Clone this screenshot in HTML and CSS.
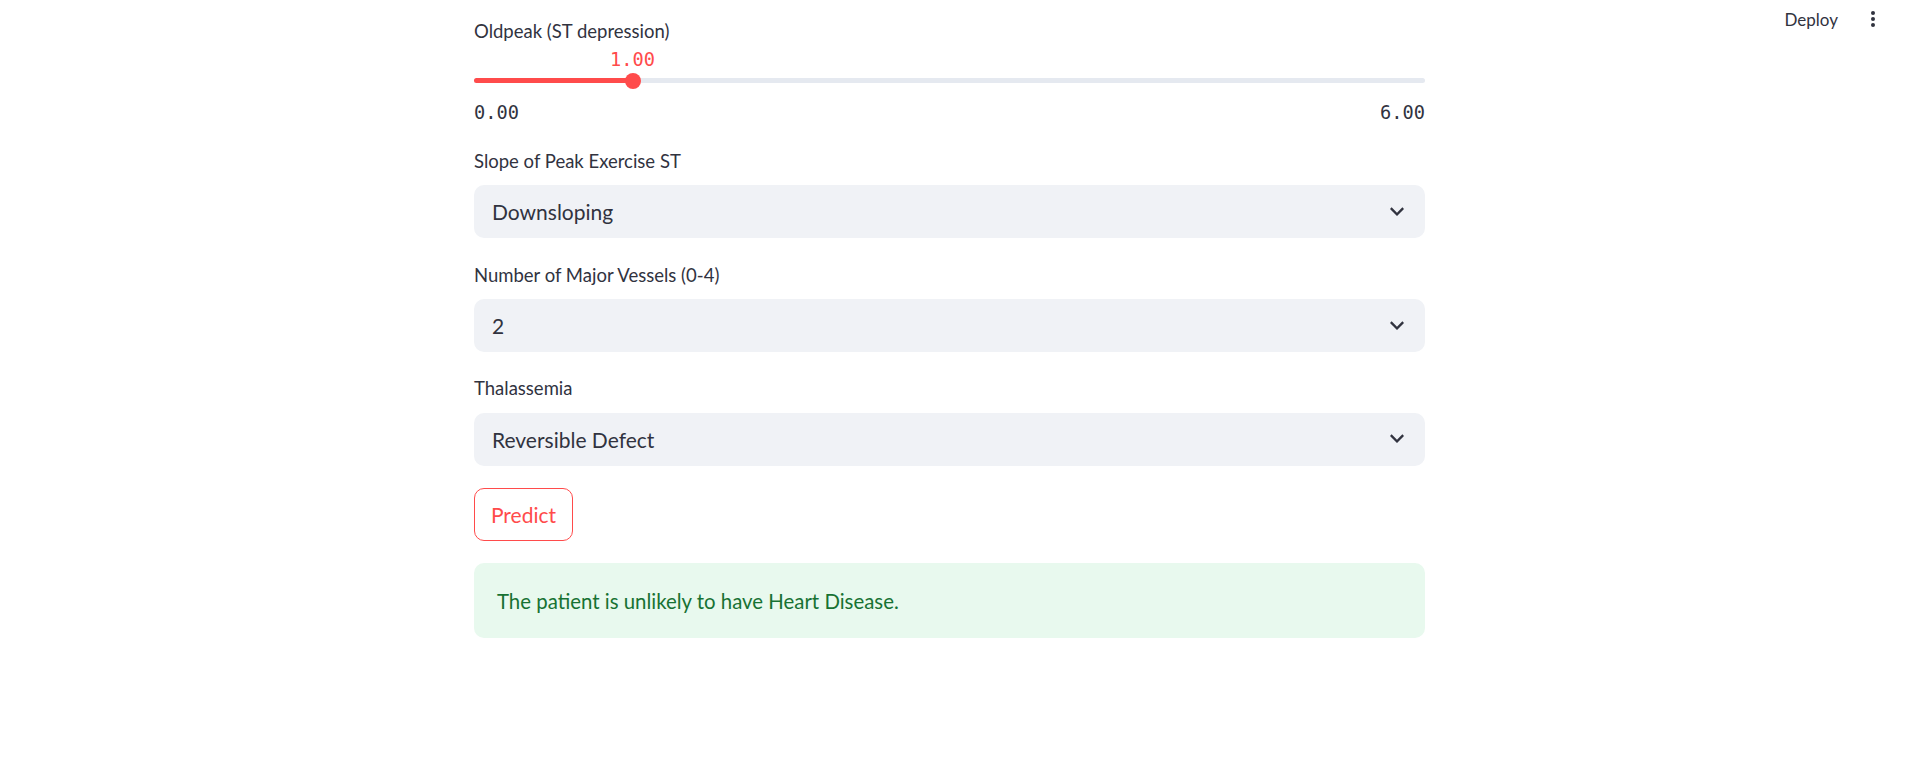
FILE: index.html
```html
<!DOCTYPE html>
<html lang="en">
<head>
<meta charset="utf-8">
<title>Heart Disease Prediction</title>
<link rel="stylesheet" href="styles.css">
</head>
<body>
<header class="topbar">
  <span class="deploy">Deploy</span>
  <span class="kebab"><i></i><i></i><i></i></span>
</header>
<main class="main">
  <section class="field">
    <div class="label">Oldpeak (ST depression)</div>
    <div class="slider">
      <div class="slider-value-row">
        <span class="slider-value" style="left: 16.667%">1.00</span>
      </div>
      <div class="slider-track-row">
        <div class="track">
          <div class="track-fill" style="width: 16.667%"></div>
          <div class="thumb" style="left: 16.667%"></div>
        </div>
      </div>
      <div class="slider-ticks">
        <span>0.00</span>
        <span>6.00</span>
      </div>
    </div>
  </section>

  <section class="field">
    <div class="label">Slope of Peak Exercise ST</div>
    <div class="select">
      <span class="select-text">Downsloping</span>
      <svg class="chevron" viewBox="0 0 24 24" width="28" height="28"><path d="M12 15.4l-6-6L7.4 8l4.6 4.6L16.6 8 18 9.4l-6 6z"/></svg>
    </div>
  </section>

  <section class="field">
    <div class="label">Number of Major Vessels (0-4)</div>
    <div class="select">
      <span class="select-text">2</span>
      <svg class="chevron" viewBox="0 0 24 24" width="28" height="28"><path d="M12 15.4l-6-6L7.4 8l4.6 4.6L16.6 8 18 9.4l-6 6z"/></svg>
    </div>
  </section>

  <section class="field">
    <div class="label">Thalassemia</div>
    <div class="select">
      <span class="select-text">Reversible Defect</span>
      <svg class="chevron" viewBox="0 0 24 24" width="28" height="28"><path d="M12 15.4l-6-6L7.4 8l4.6 4.6L16.6 8 18 9.4l-6 6z"/></svg>
    </div>
  </section>

  <div class="btn-row">
    <button class="btn">Predict</button>
  </div>

  <div class="alert">The patient is unlikely to have Heart Disease.</div>
</main>
</body>
</html>
```

FILE: styles.css
```css
html, body {
  margin: 0;
  padding: 0;
  background: #ffffff;
}

body {
  font-family: Lato, "Noto Sans", sans-serif;
  color: rgb(49, 51, 63);
  width: 1909px;
  height: 757px;
  overflow: hidden;
  position: relative;
}

.topbar {
  position: absolute;
  top: 0;
  right: 0;
  display: flex;
  align-items: center;
  height: 38px;
  padding-right: 34px;
}

.deploy {
  font-size: 17px;
  color: rgb(49, 51, 63);
  margin-right: 33px;
}

.kebab {
  display: flex;
  flex-direction: column;
  gap: 2.3px;
}

.kebab i {
  display: block;
  width: 4px;
  height: 4px;
  border-radius: 50%;
  background: rgb(49, 51, 63);
}

.main {
  width: 951px;
  margin-left: 474px;
  padding-top: 16.5px;
  display: flex;
  flex-direction: column;
  gap: 22.3px;
}

.field {
  display: flex;
  flex-direction: column;
}

.label {
  height: 33px;
  line-height: 29px;
  font-size: 18.5px;
  margin-bottom: 5.5px;
  color: rgb(49, 51, 63);
}

.field:first-child .label {
  margin-bottom: 0;
}

/* slider */
.slider {
  font-family: "DejaVu Sans Mono", "Liberation Mono", monospace;
  font-size: 18.67px;
}

.slider-value-row {
  position: relative;
  height: 19px;
}

.slider-value {
  position: absolute;
  top: 0;
  line-height: 19px;
  transform: translateX(-50%);
  color: rgb(255, 75, 75);
}

.slider-track-row {
  height: 24px;
  display: flex;
  align-items: center;
}

.track {
  position: relative;
  width: 100%;
  height: 5px;
  border-radius: 3px;
  background: rgb(229, 233, 240);
}

.track-fill {
  height: 100%;
  border-radius: 3px;
  background: rgb(255, 75, 75);
}

.thumb {
  position: absolute;
  top: 50%;
  width: 16px;
  height: 16px;
  border-radius: 50%;
  background: rgb(255, 75, 75);
  transform: translate(-50%, -50%);
}

.slider-ticks {
  height: 32px;
  padding-top: 8px;
  box-sizing: border-box;
  line-height: 23px;
  display: flex;
  justify-content: space-between;
  color: rgb(49, 51, 63);
}

/* select */
.select {
  height: 53px;
  box-sizing: border-box;
  background: rgb(240, 242, 246);
  border-radius: 10px;
  display: flex;
  align-items: center;
  justify-content: space-between;
  padding: 0 14px 0 18px;
}

.select-text {
  font-size: 21px;
  color: rgb(49, 51, 63);
}

.chevron {
  fill: rgb(49, 51, 63);
}

/* button */
.btn-row {
  display: flex;
}

.btn {
  height: 53px;
  width: 99px;
  box-sizing: border-box;
  border: 1.3px solid rgb(255, 75, 75);
  border-radius: 10px;
  background: #ffffff;
  color: rgb(255, 75, 75);
  font-family: Lato, "Noto Sans", sans-serif;
  font-size: 21px;
  padding: 0;
  cursor: pointer;
}

/* alert */
.alert {
  height: 75px;
  box-sizing: border-box;
  padding: 20.5px 23px;
  line-height: 34px;
  font-size: 20.4px;
  border-radius: 10px;
  background: rgb(232, 249, 238);
  color: rgb(23, 114, 51);
}
```
